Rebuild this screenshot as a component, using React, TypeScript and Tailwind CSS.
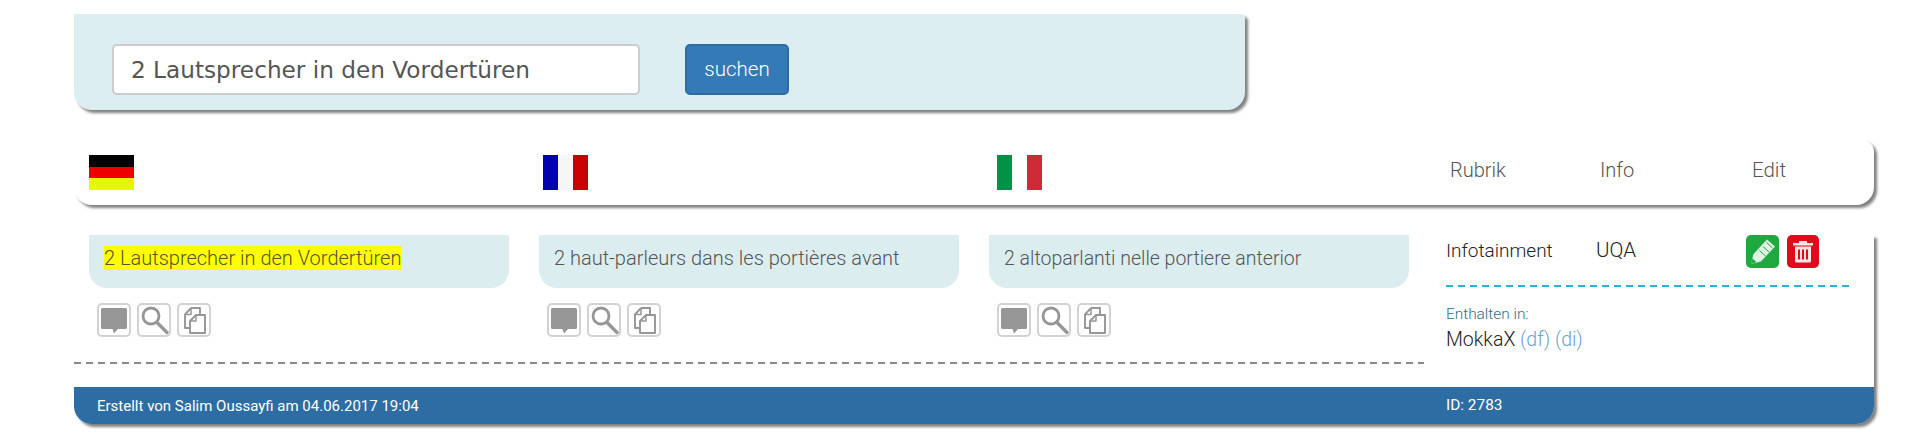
const sans = "font-['Roboto','Liberation_Sans',Arial,sans-serif] font-light";

function Bubble() {
  return (
    <svg viewBox="2 2 30 30" className="w-full h-full">
      <path d="M5.5 5h23A1.5 1.5 0 0 1 30 6.5v18a1.5 1.5 0 0 1-1.5 1.5H21l-4 4.5-1.5-4.5h-10A1.5 1.5 0 0 1 4 24.5v-18A1.5 1.5 0 0 1 5.5 5z" fill="#969696" />
    </svg>
  );
}
function Lens() {
  return (
    <svg viewBox="2 2 30 30" fill="none" stroke="#969696" className="w-full h-full">
      <circle cx="14" cy="13" r="8" strokeWidth="2.8" />
      <path d="M20 19.5L30 29.5" strokeWidth="3.4" strokeLinecap="round" />
    </svg>
  );
}
function Copy() {
  return (
    <svg viewBox="2 2 30 30" fill="none" stroke="#969696" strokeWidth="1.9" strokeLinejoin="round" className="w-full h-full">
      <path d="M14 5h9v7M14 5l-6 6.5V25h6" />
      <path d="M8 11.5h6V5" strokeWidth="1.5" />
      <path d="M19 12h9v18H13V18z" fill="#ffffff" />
      <path d="M19 12v6h-6" strokeWidth="1.5" />
    </svg>
  );
}

function ActionIcons() {
  return (
    <div className="flex gap-[6px] mt-[15px] ml-[8px]">
      {[Bubble, Lens, Copy].map((Icon, i) => (
        <span key={i} className="w-[34px] h-[34px] rounded-[5px] border-2 border-[#d2d2d2] bg-white overflow-hidden">
          <Icon />
        </span>
      ))}
    </div>
  );
}

function Tile({ children, size }: { children: React.ReactNode; size: string }) {
  return (
    <div className="w-[420px]">
      <div className={`h-[53px] bg-[#dcedf0] rounded-b-[18px] pl-[15px] pt-[12px] ${size} leading-[23px] text-[#555555]`}>
        {children}
      </div>
      <ActionIcons />
    </div>
  );
}

function Flag({ colors, vertical }: { colors: string[]; vertical?: boolean }) {
  return (
    <div className={`w-[45px] h-[35px] flex ${vertical ? "flex-row" : "flex-col"}`}>
      {colors.map((c, i) => (
        <div key={i} className="flex-1" style={{ background: c }} />
      ))}
    </div>
  );
}

export default function App() {
  return (
    <div className={`${sans} w-[1920px] h-[447px] bg-white pl-[74px] pt-[14px] overflow-hidden`}>
      <div className="w-[1171px] h-[96px] bg-[#dceef2] rounded-b-[18px] rounded-tr-[4px] shadow-[3px_3px_3px_#808080] flex items-start pt-[30px] pl-[38px]">
        <div className="w-[528px] h-[51px] bg-white border-2 border-[#cccccc] rounded-[5px] pl-[17px] pt-[2px] flex items-center text-[23.2px] text-[#555555] font-normal font-['DejaVu_Sans',sans-serif]">
          2 Lautsprecher in den Vordertüren
        </div>
        <div className="ml-[45px] w-[104px] h-[51px] bg-[#337ab7] border-2 border-[#2e6da4] rounded-[5px] flex items-center justify-center text-[20.5px] text-white">
          suchen
        </div>
      </div>

      <div className="w-[1800px] h-[65px] mt-[30px] bg-white rounded-b-[18px] rounded-tr-[12px] shadow-[3px_3px_3px_#808080] flex pl-[15px] pt-[15px]">
        <div className="w-[454px]"><Flag colors={["#000000", "#ee0000", "#e4f60a"]} /></div>
        <div className="w-[454px]"><Flag vertical colors={["#0000b0", "#f4f6f8", "#c80000"]} /></div>
        <div className="w-[453px]"><Flag vertical colors={["#009246", "#ffffff", "#ce2b37"]} /></div>
        <div className="w-[150px] pt-[3px] text-[20px] leading-[24px] text-[#555555]">Rubrik</div>
        <div className="w-[152px] pt-[3px] text-[20px] leading-[24px] text-[#555555]">Info</div>
        <div className="pt-[3px] text-[20.5px] leading-[24px] text-[#555555]">Edit</div>
      </div>

      <div className="w-[1800px] mt-[30px] bg-white rounded-b-[18px] shadow-[3px_3px_3px_#808080]">
        <div className="flex h-[152px]">
          <div className="w-[1350px]">
            <div className="h-[127px] pl-[15px] flex gap-[30px]">
              <Tile size="text-[20px]"><mark className="bg-[#ffff00] text-[#55552a]">2 Lautsprecher in den Vordertüren</mark></Tile>
              <Tile size="text-[20px]">2 haut-parleurs dans les portières avant</Tile>
              <Tile size="text-[19.5px]">2 altoparlanti nelle portiere anterior</Tile>
            </div>
            <div className="h-[2px] bg-[repeating-linear-gradient(90deg,#8a8a8a_0,#8a8a8a_7px,transparent_7px,transparent_12px)]" />
          </div>
          <div className="ml-[22px] w-[404px]">
            <div className="h-[50px] flex items-start">
              <div className="w-[150px] pt-[4px] text-[19px] leading-[23px] text-[#222222]">Infotainment</div>
              <div className="w-[149px] pt-[4px] text-[20.5px] leading-[23px] text-[#222222]">UQA</div>
              <div className="flex gap-[8px] ml-[1px]">
                <span className="w-[33px] h-[33px] rounded-[5px] bg-[#1fa83f] flex items-center justify-center">
                  <svg viewBox="0 0 33 33" className="w-[33px] h-[33px]">
                    <path d="M21 4.5l8 7-14 15-10 2.5 2.5-10z" fill="#dff3e2" />
                    <path d="M20.5 7.5l6 5.5M17 11.5l6 5.5M13.5 15.5l6 5.5" stroke="#1fa83f" strokeWidth="1" />
                    <path d="M5 29l1.4-5.5 4 3.6z" fill="#1fa83f" />
                  </svg>
                </span>
                <span className="w-[32px] h-[33px] rounded-[5px] bg-[#e00a1a] flex items-center justify-center">
                  <svg viewBox="0 0 32 33" className="w-[32px] h-[33px]">
                    <path d="M6 8h20v2.5H6z M12 6h8v2h-8z" fill="#fbe3e3" />
                    <path d="M8 11.5h16V26a1.5 1.5 0 0 1-1.5 1.5h-13A1.5 1.5 0 0 1 8 26z" fill="#fbe3e3" />
                    <path d="M12 14.5v10M16 14.5v10M20 14.5v10" stroke="#e00a1a" strokeWidth="2" />
                  </svg>
                </span>
              </div>
            </div>
            <div className="h-[2px] bg-[repeating-linear-gradient(90deg,#31b0d5_0,#31b0d5_7px,transparent_7px,transparent_12px)]" />
            <div className="mt-[18px] text-[15.4px] leading-[18px] text-[#2a6f8f]">Enthalten in:</div>
            <div className="mt-[5px] text-[19.5px] leading-[23px] text-[#222222]">
              MokkaX <span className="text-[#6d9fd0]">(df) (di)</span>
            </div>
          </div>
        </div>
        <div className="h-[37px] bg-[#2e6da4] rounded-b-[18px] flex items-center pt-[1px] text-white font-normal text-[15px]">
          <div className="pl-[23px] w-[1372px]">Erstellt von Salim Oussayfi am 04.06.2017 19:04</div>
          <div className="text-[15.4px]">ID: 2783</div>
        </div>
      </div>
    </div>
  );
}
